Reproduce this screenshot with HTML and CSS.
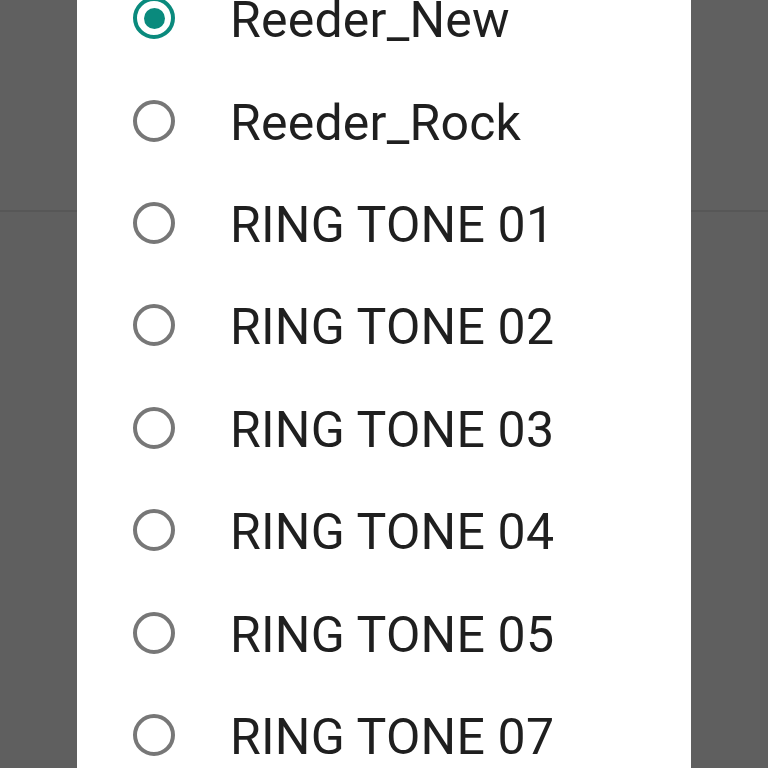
FILE: index.html
```html
<!DOCTYPE html>
<html>
<head>
<meta charset="utf-8">
<link rel="stylesheet" href="styles.css">
</head>
<body>
<div class="backdrop">
  <div class="top"></div>
  <div class="rest"></div>
</div>
<div class="dialog">
  <ul class="list">
    <li class="row"><span class="radio checked"></span><span class="label">Reeder_New</span></li>
    <li class="row"><span class="radio"></span><span class="label">Reeder_Rock</span></li>
    <li class="row"><span class="radio"></span><span class="label">RING TONE 01</span></li>
    <li class="row"><span class="radio"></span><span class="label">RING TONE 02</span></li>
    <li class="row"><span class="radio"></span><span class="label">RING TONE 03</span></li>
    <li class="row"><span class="radio"></span><span class="label">RING TONE 04</span></li>
    <li class="row"><span class="radio"></span><span class="label">RING TONE 05</span></li>
    <li class="row"><span class="radio"></span><span class="label">RING TONE 07</span></li>
  </ul>
</div>
</body>
</html>
```
FILE: styles.css
```css
html, body {
  margin: 0;
  padding: 0;
  width: 768px;
  height: 768px;
  overflow: hidden;
  background: #5f5f5f;
  font-family: Roboto, "Noto Sans", sans-serif;
}
.backdrop {
  display: flex;
  flex-direction: column;
  height: 768px;
}
.top {
  height: 210px;
  border-bottom: 2px solid #575757;
  background: #606060;
}
.rest {
  flex: 1;
  background: #5f5f5f;
}
.dialog {
  position: absolute;
  left: 77px;
  top: 0;
  width: 614px;
  height: 768px;
  background: #ffffff;
  overflow: hidden;
}
.list {
  list-style: none;
  margin: -33px 0 0 0;
  padding: 0;
}
.row {
  height: 102.4px;
  display: flex;
  align-items: center;
  padding-left: 56px;
}
.radio {
  box-sizing: border-box;
  width: 42px;
  height: 42px;
  border: 4px solid #777777;
  border-radius: 50%;
  display: flex;
  align-items: center;
  justify-content: center;
  flex: none;
}
.radio.checked {
  border-color: #0a8a7d;
}
.radio.checked::after {
  content: "";
  width: 21px;
  height: 21px;
  border-radius: 50%;
  background: #0a8a7d;
}
.label {
  margin-left: 55px;
  font-size: 50px;
  letter-spacing: 0.2px;
  color: #1f1f1f;
  line-height: 1;
  position: relative;
  top: 2px;
}
```
